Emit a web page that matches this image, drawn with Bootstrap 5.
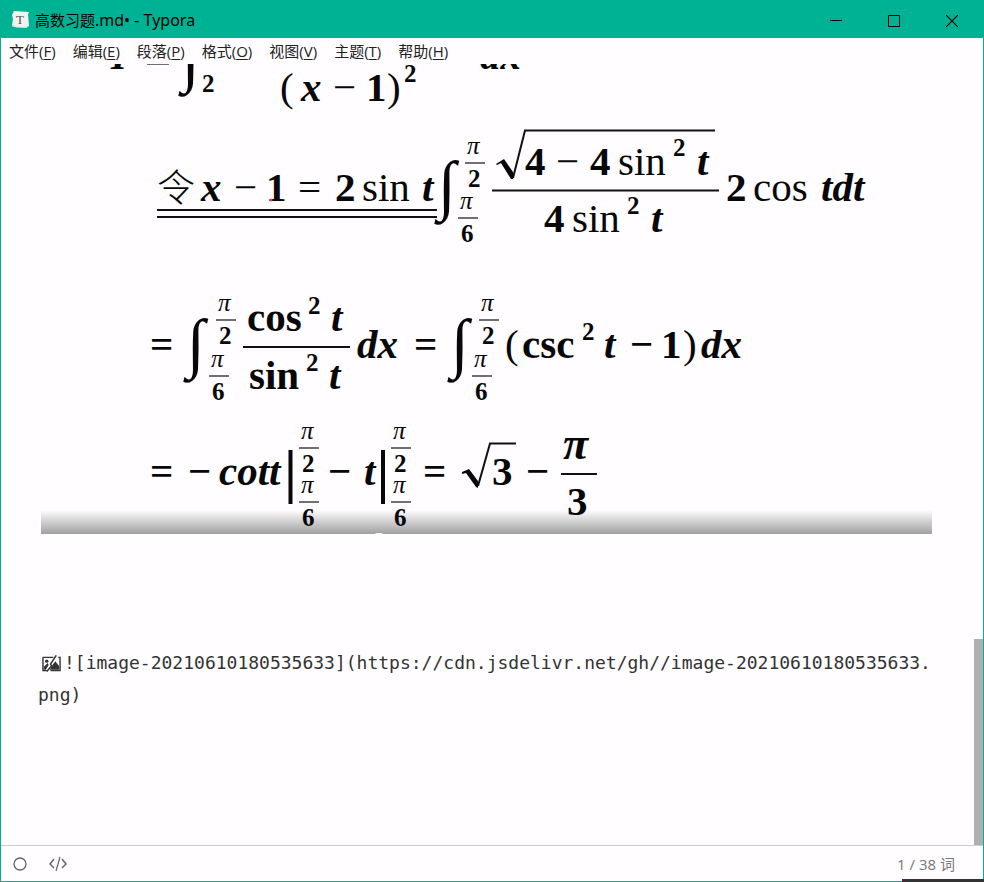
<!DOCTYPE html>
<html lang="zh-CN">
<head>
<meta charset="utf-8">
<meta name="viewport" content="width=device-width, initial-scale=1">
<title>高数习题.md• - Typora</title>
<link href="https://cdn.jsdelivr.net/npm/bootstrap@5.3.0/dist/css/bootstrap.min.css" rel="stylesheet">
<style>
body { font-family: "Noto Sans", "Noto Sans CJK SC", sans-serif; font-size: 15px; line-height: 20px; color: #222; background: #fffdff; }
.app-window { border: 1px solid #00b294; }
.title-bar { background: #00b294; color: #000; height: 37px; }
.title-text { font-size: 15px; font-weight: 400; padding-left: 5px; }
.title-latin { font-size: 16px; }
.app-icon { margin-left: 10px; }
.win-buttons { padding-right: 2px; }
.win-btn { width: 58px; height: 36px; border: 0; background: none; color: #000; padding: 0; }
.menu-bar { padding: 3px 8px; gap: 17px; }
.menu-bar button { border: 0; background: none; padding: 0; font-size: 15px; color: #222; font-family: "Open Sans", "Noto Sans CJK SC", sans-serif; }
.menu-bar u { text-underline-offset: 2px; }
.doc-body { padding: 0 38px 0 37px; }
.doc-figure { padding: 0 4px 0 3px; margin: 0 0 113px; }
.doc-source { font: 18px/32px "DejaVu Sans Mono", monospace; color: #333; margin: 0; }
.broken-icon { margin: 0 3px 0 4px; vertical-align: -4px; }
.scroll-track { width: 9px; }
.scroll-thumb { background: #b0b0b0; height: 26.4%; }
.status-bar { border-top: 1px solid #ccc; height: 36px; color: #777; padding: 0 28px 0 11px; gap: 20px; font-family: "Open Sans", "Noto Sans CJK SC", sans-serif; }
.status-bar button { border: 0; background: none; padding: 0; color: #666; line-height: 1; }
.edge-strip { right: -1px; bottom: -1px; width: 82px; height: 3px; background: #333; }
.formula { font-family: "Liberation Serif", "Noto Sans CJK SC", serif; font-size: 41px; fill: #080808; }
.formula .bd { font-weight: 700; }
.formula .bi { font-weight: 700; font-style: italic; }
.formula .sm { font-size: 25px; font-weight: 700; }
.formula .pi { font-size: 25px; font-style: italic; }
.formula .big-pi { font-size: 46px; font-weight: 700; font-style: italic; }
.formula .intg { font-size: 66px; font-weight: 700; }
.formula .cjk { font-size: 38px; font-weight: 300; }
.formula .rule { stroke: #111; stroke-width: 2; fill: none; }
.formula .thin { stroke: #333; stroke-width: 1.4; fill: none; }
</style>
</head>
<body>
<div class="app-window vh-100 d-flex flex-column position-relative">
  <header class="title-bar d-flex align-items-center flex-shrink-0">
    <svg class="app-icon" width="19" height="19" viewBox="0 0 19 19" aria-hidden="true">
      <path d="M3 1 18 2Q18 3 17 4L18 16Q17 17 15 18L3 17Q1 17 1 15L2 9 1 5Z" fill="#f2f2f0"/>
      <path d="M2 15 5 17 15 17.500 17 16" stroke="#c9d9d4" fill="none"/>
      <text x="9" y="14" text-anchor="middle" font-family="Liberation Serif, serif" font-size="13" fill="#555">T</text>
    </svg>
    <h1 class="title-text mb-0 lh-1">高数习题<span class="title-latin">.md• - Typora</span></h1>
    <div class="win-buttons ms-auto d-flex">
      <button class="win-btn" type="button" aria-label="最小化"><svg width="12" height="12"><path d="M0 5.500H12" stroke="#000"/></svg></button>
      <button class="win-btn" type="button" aria-label="最大化"><svg width="12" height="12"><path d="M.5.5h11v11H.5z" stroke="#000" fill="none"/></svg></button>
      <button class="win-btn" type="button" aria-label="关闭"><svg width="12" height="12"><path d="M0 0 12 12M12 0 0 12" stroke="#000" stroke-width="1.200"/></svg></button>
    </div>
  </header>

  <nav class="menu-bar d-flex flex-shrink-0" aria-label="菜单">
    <button type="button">文件(<u>F</u>)</button>
    <button type="button">编辑(<u>E</u>)</button>
    <button type="button">段落(<u>P</u>)</button>
    <button type="button">格式(<u>O</u>)</button>
    <button type="button">视图(<u>V</u>)</button>
    <button type="button">主题(<u>T</u>)</button>
    <button type="button">帮助(<u>H</u>)</button>
  </nav>

  <div class="d-flex flex-grow-1 overflow-hidden">
    <main class="doc-body flex-grow-1">
      <figure class="doc-figure">
        <svg class="formula d-block w-100" viewBox="41 64 891 470" role="img" aria-label="定积分换元计算">
          <defs>
            <linearGradient id="shade" x1="0" y1="0" x2="0" y2="1">
              <stop offset="0" stop-color="#fffdff"/><stop offset="1" stop-color="#a0a0a0"/>
            </linearGradient>
            <g id="limits">
              <text class="pi" x="2" y="0">π</text><path class="thin" d="M0 9H20"/>
              <text class="sm" x="3" y="33">2</text>
            </g>
            <g id="lower">
              <text class="pi" x="2" y="0">π</text><path class="thin" d="M0 9H20"/>
              <text class="sm" x="3" y="33">6</text>
            </g>
          </defs>
          <rect x="41" y="510" width="891" height="24" fill="url(#shade)"/>
          <ellipse cx="379" cy="535" rx="5" ry="2" fill="#fff"/>

          <text class="bi" x="111" y="69">I</text>
          <path class="thin" d="M147 64H169"/>
          <text class="intg" x="182" y="79">∫</text>
          <text class="sm" x="202" y="92">2</text>
          <text x="280" y="101">(</text><text class="bi" x="301" y="101">x</text>
          <text x="333" y="101">−</text><text class="bd" x="366" y="101">1</text><text x="387" y="101">)</text>
          <text class="sm" x="404" y="82">2</text>
          <text class="bi" x="480" y="69">dx</text>

          <text class="cjk" x="157" y="201">令</text>
          <text class="bi" x="201" y="201">x</text><text x="234" y="201">−</text>
          <text class="bd" x="266" y="201">1</text><circle cx="271" cy="200" r="1.500" fill="#e04455"/>
          <text x="298" y="201">=</text><text class="bd" x="335" y="201">2</text>
          <text x="362" y="201">sin</text><text class="bi" x="422" y="201">t</text>
          <path class="rule" d="M157 210H437M157 217H437"/>
          <text class="intg" x="438" y="207">∫</text>
          <use href="#limits" x="465" y="154"/><use href="#lower" x="458" y="209"/>
          <path class="rule" d="M492 190.500H719"/>
          <path class="rule" d="M513 178 525 130.500H715"/>
          <path d="M496 164 504 159 513 172 513 179 511 179 501 163 497 165Z"/>
          <text class="bd" x="525" y="175">4</text><text x="556" y="175">−</text>
          <text class="bd" x="590" y="175">4</text><text x="618" y="175">sin</text>
          <text class="sm" x="673" y="156">2</text><text class="bi" x="697" y="175">t</text>
          <text class="bd" x="544" y="232">4</text><text x="572" y="232">sin</text>
          <text class="sm" x="627" y="214">2</text><text class="bi" x="651" y="232">t</text>
          <text class="bd" x="726" y="201">2</text><text x="753" y="201">cos</text>
          <text class="bi" x="821" y="201">tdt</text>

          <text class="bd" x="150" y="358">=</text>
          <text class="intg" x="187" y="365">∫</text>
          <use href="#limits" x="216" y="311"/><use href="#lower" x="209" y="367"/>
          <text class="bd" x="247" y="331">cos</text><text class="sm" x="308" y="314">2</text>
          <text class="bi" x="331" y="331">t</text><path class="rule" d="M243 347H350"/>
          <text class="bd" x="249" y="389">sin</text><text class="sm" x="306" y="371">2</text>
          <text class="bi" x="329" y="389">t</text>
          <text class="bi" x="357" y="358">dx</text><text class="bd" x="414" y="358">=</text>
          <text class="intg" x="451" y="365">∫</text>
          <use href="#limits" x="479" y="311"/><use href="#lower" x="472" y="367"/>
          <text x="505" y="358">(</text><text class="bd" x="522" y="358">csc</text>
          <text class="sm" x="582" y="340">2</text><text class="bi" x="604" y="358">t</text>
          <text class="bd" x="630" y="358">−</text><text class="bd" x="661" y="358">1</text>
          <text x="683" y="358">)</text><text class="bi" x="701" y="358">dx</text>

          <text class="bd" x="150" y="485">=</text><text class="bd" x="188" y="485">−</text>
          <text class="bi" x="219" y="485">cott</text>
          <path d="M288.500 450h4v54h-4zM381 450h4v54h-4z"/>
          <use href="#limits" x="299" y="439"/><use href="#lower" x="299" y="493"/>
          <text class="bd" x="328" y="485">−</text><text class="bi" x="364" y="485">t</text>
          <use href="#limits" x="391" y="439"/><use href="#lower" x="391" y="493"/>
          <text class="bd" x="423" y="485">=</text>
          <path class="rule" d="M478 486 490 443.500H516"/>
          <path d="M462 472 469 469 478 481 478 488 476 487 466 473 462 474Z"/>
          <text class="bd" x="492" y="485">3</text><text class="bd" x="526" y="485">−</text>
          <text class="big-pi" x="563" y="459">π</text><path class="rule" d="M561 474H597"/>
          <text class="bd" x="567" y="515">3</text>
        </svg>
      </figure>
      <p class="doc-source"><svg class="broken-icon" width="19" height="18" viewBox="0 0 20 18" aria-hidden="true"><path d="M1 2H12M17 2H19V16H9M5 16H1V2" fill="none" stroke="#333" stroke-width="1.500"/><circle cx="5" cy="6" r="1.800" fill="#333"/><path d="M2 15V12L6 8 7 10 4 15ZM8 15 11 10 14 6 18 11V15Z" fill="#333"/><path d="M15 0 9 9 10 11 5 17" fill="none" stroke="#333" stroke-width="1.600"/></svg>![image-20210610180535633](https://cdn.jsdelivr.net/gh//image-20210610180535633.<wbr>png)</p>
    </main>
    <div class="scroll-track d-flex flex-column justify-content-end flex-shrink-0"><div class="scroll-thumb"></div></div>
  </div>

  <footer class="status-bar d-flex align-items-center flex-shrink-0">
    <button type="button" aria-label="侧边栏"><svg width="16" height="16"><circle cx="8" cy="8" r="6" fill="none" stroke="#666" stroke-width="1.300"/></svg></button>
    <button type="button" aria-label="源代码模式"><svg width="20" height="16" fill="none" stroke="#666" stroke-width="1.500"><path d="M6 3 2 8 6 12M14 3 18 8 14 12"/><path d="M12 1 8 15" stroke-width="1.200"/></svg></button>
    <span class="ms-auto">1 / 38 词</span>
  </footer>
  <div class="edge-strip position-absolute"></div>
</div>
<script src="https://cdn.jsdelivr.net/npm/bootstrap@5.3.0/dist/js/bootstrap.bundle.min.js"></script>
</body>
</html>
